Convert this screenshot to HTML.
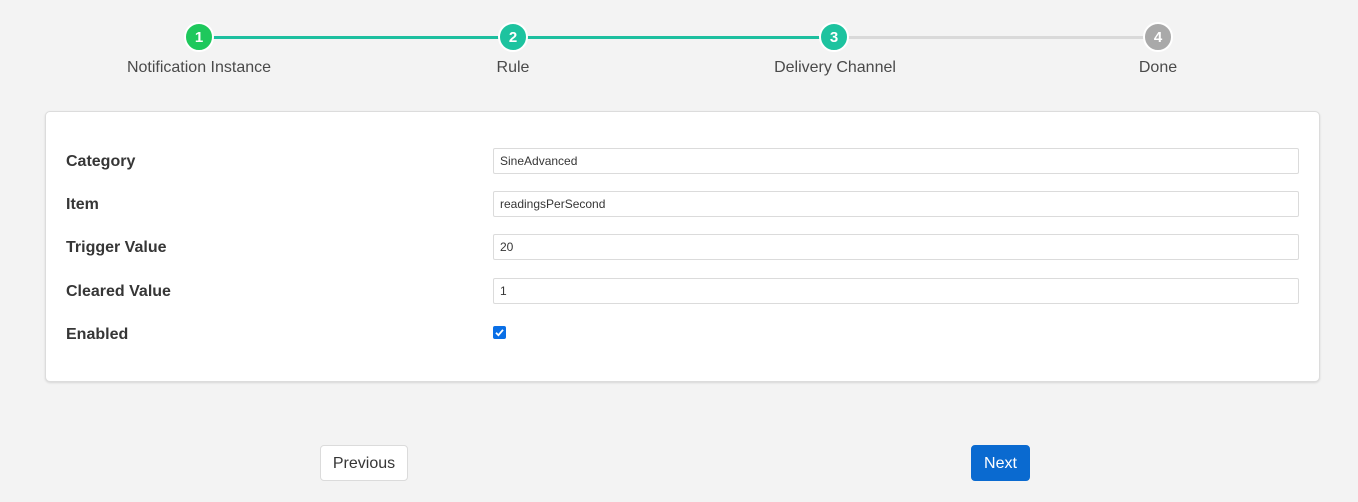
<!DOCTYPE html>
<html><head><meta charset="utf-8"><style>
*{box-sizing:border-box;margin:0;padding:0}
body{width:1358px;height:502px;background:#f3f3f3;font-family:"Liberation Sans",sans-serif;position:relative;overflow:hidden;color:#363636}
.line{position:absolute;top:36px;height:3px}
.c{position:absolute;top:22px;width:30px;height:30px;border-radius:50%;border:2px solid #fff;color:#fff;font-weight:bold;font-size:15px;text-align:center;line-height:27px}
.lbl{position:absolute;top:59px;width:240px;text-align:center;font-size:16px;color:#4a4a4a}
.card{position:absolute;left:45px;top:111px;width:1275px;height:271px;background:#fff;border:1px solid #dcdcdc;border-radius:5px;box-shadow:0 1px 2px rgba(0,0,0,.12)}
.fl{position:absolute;left:66px;font-weight:bold;font-size:16px;color:#363636}
.in{position:absolute;left:493px;width:806px;height:26px;border:1px solid #dbdbdb;border-radius:2px;font-size:12px;padding-left:6px;line-height:25px;color:#363636;background:#fff}
.btn{position:absolute;top:445px;height:36px;border-radius:4px;font-size:16px;line-height:36px;text-align:center}
</style></head><body>
<div class="line" style="left:199px;width:635px;background:#1dbf9f"></div>
<div class="line" style="left:834px;width:324px;background:#d9d9d9"></div>
<div class="c" style="left:184px;background:#1ec85c">1</div>
<div class="c" style="left:498px;background:#1dc39f">2</div>
<div class="c" style="left:819px;background:#1dc39f">3</div>
<div class="c" style="left:1143px;background:#a9a9a9">4</div>
<div class="lbl" style="left:79px">Notification Instance</div>
<div class="lbl" style="left:393px">Rule</div>
<div class="lbl" style="left:715px">Delivery Channel</div>
<div class="lbl" style="left:1038px">Done</div>
<div class="card"></div>
<div class="fl" style="top:153px">Category</div>
<div class="fl" style="top:196px">Item</div>
<div class="fl" style="top:239px">Trigger Value</div>
<div class="fl" style="top:283px">Cleared Value</div>
<div class="fl" style="top:326px">Enabled</div>
<div class="in" style="top:148px">SineAdvanced</div>
<div class="in" style="top:191px">readingsPerSecond</div>
<div class="in" style="top:234px">20</div>
<div class="in" style="top:278px">1</div>
<div style="position:absolute;left:493px;top:326px;width:13px;height:13px;background:#0a6fe6;border-radius:2px">
<svg width="13" height="13" viewBox="0 0 13 13" style="position:absolute;left:0;top:0"><path d="M3 6.8 L5.4 9.2 L10 3.8" stroke="#fff" stroke-width="1.8" fill="none"/></svg></div>
<div class="btn" style="left:320px;width:88px;background:#fff;border:1px solid #dbdbdb;color:#363636">Previous</div>
<div class="btn" style="left:971px;width:59px;background:#0a6ad0;color:#fff;border:1px solid #0a6ad0">Next</div>
</body></html>
